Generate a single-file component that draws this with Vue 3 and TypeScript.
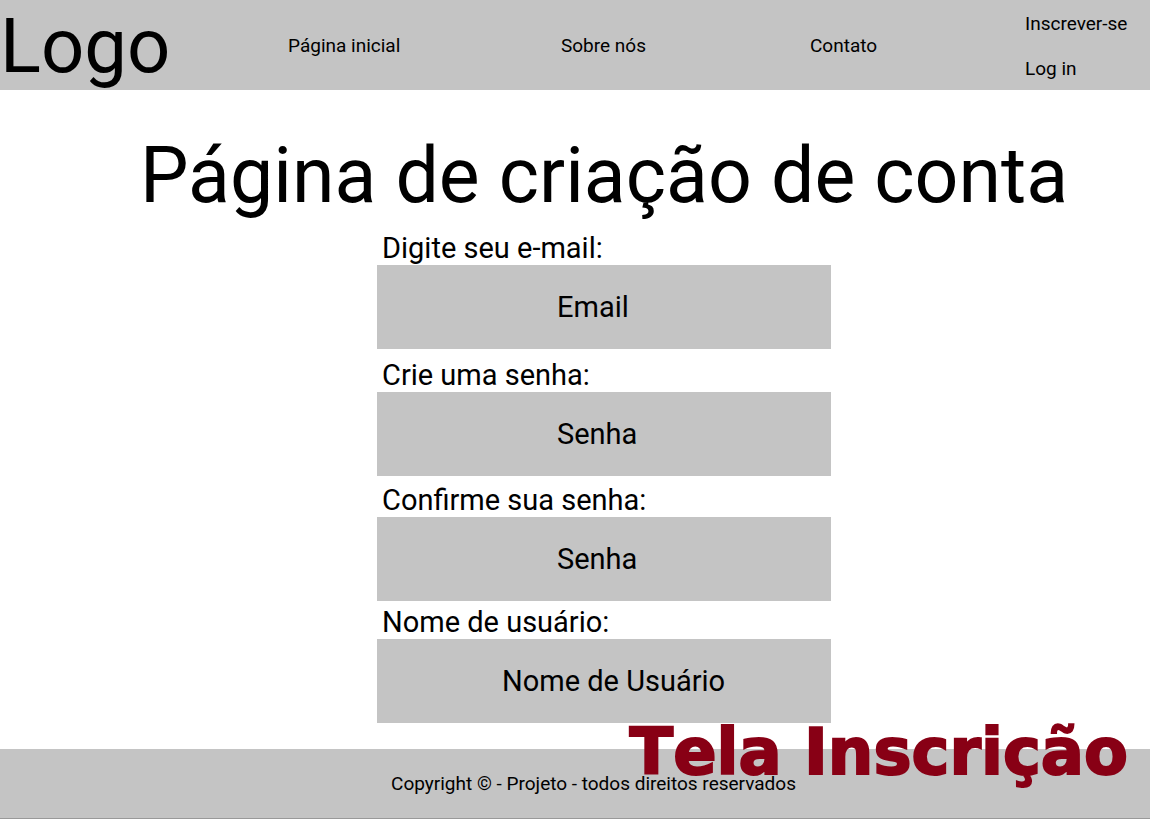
<script setup lang="ts">
import { reactive } from 'vue'

interface Field {
  id: string
  label: string
  placeholder: string
  type: string
  wide?: boolean
}

const fields: Field[] = [
  { id: 'email', label: 'Digite seu e-mail:', placeholder: 'Email', type: 'email' },
  { id: 'senha', label: 'Crie uma senha:', placeholder: 'Senha', type: 'password' },
  { id: 'confirma', label: 'Confirme sua senha:', placeholder: 'Senha', type: 'password' },
  { id: 'usuario', label: 'Nome de usuário:', placeholder: 'Nome de Usuário', type: 'text', wide: true },
]

const values = reactive<Record<string, string>>({ email: '', senha: '', confirma: '', usuario: '' })
</script>

<template>
  <div class="page">
    <header class="header">
      <a class="logo" href="#">Logo</a>
      <a class="link" href="#inicio">Página inicial</a>
      <a class="link" href="#sobre">Sobre nós</a>
      <a class="link" href="#contato">Contato</a>
      <nav class="account">
        <a class="link" href="#inscrever">Inscrever-se</a>
        <a class="link" href="#login">Log in</a>
      </nav>
    </header>

    <main class="main">
      <h1 class="title">Página de criação de conta</h1>
      <form class="form" @submit.prevent>
        <div v-for="f in fields" :key="f.id" class="field">
          <label class="label" :for="f.id">{{ f.label }}</label>
          <input
            :id="f.id"
            v-model="values[f.id]"
            class="input"
            :class="{ wide: f.wide }"
            :type="f.type"
            :placeholder="f.placeholder"
          />
        </div>
      </form>
    </main>

    <footer class="footer">
      <p class="copyright">Copyright © - Projeto - todos direitos reservados</p>
      <strong class="caption">Tela Inscrição</strong>
    </footer>
  </div>
</template>

<style>
body {
  margin: 0;
  background: #fff;
}
</style>

<style scoped>
.page {
  display: flex;
  flex-direction: column;
  min-height: 100vh;
  color: #000;
  font-family: Roboto, "Liberation Sans", sans-serif;
}

.header {
  display: grid;
  grid-template-columns: 288fr 273fr 249fr 215fr 125fr;
  align-items: center;
  box-sizing: border-box;
  min-height: 90px;
  padding-top: 2px;
  background: #c4c4c4;
}

.header > * {
  min-width: 0;
}

.logo {
  color: inherit;
  font-size: 76px;
  line-height: 88px;
  text-decoration: none;
}

.link {
  color: inherit;
  font-size: 19px;
  line-height: 24px;
  text-decoration: none;
  white-space: nowrap;
}

.account {
  display: flex;
  flex-direction: column;
  gap: 21px;
}

.main {
  display: flex;
  flex: 1;
  flex-direction: column;
  align-items: center;
  padding: 41px 0 26px 58px;
}

.title {
  margin: 0;
  font-size: 77px;
  font-weight: 400;
  line-height: 90px;
  text-align: center;
}

.form {
  display: grid;
  grid-template-rows: 127px 125px 122px auto;
  width: 100%;
  max-width: 454px;
  padding-top: 10px;
}

.field {
  display: flex;
  flex-direction: column;
}

.label {
  padding-left: 5px;
  font-size: 29px;
  line-height: 34px;
}

.input {
  box-sizing: border-box;
  width: 100%;
  height: 84px;
  padding: 0 0 0 180px;
  border: 0;
  border-radius: 0;
  outline: 0;
  background: #c4c4c4;
  color: #000;
  font: inherit;
  font-size: 29px;
}

.input.wide {
  padding-left: 125px;
}

.input::placeholder {
  color: #000;
  opacity: 1;
}

.footer {
  position: relative;
  box-sizing: border-box;
  min-height: 70px;
  padding: 23px 0 22px 37px;
  border-bottom: 1px solid #999;
  background: #c4c4c4;
}

.copyright {
  margin: 0;
  font-size: 19px;
  line-height: 24px;
  text-align: center;
}

.caption {
  position: absolute;
  right: 22px;
  bottom: 26px;
  color: #880015;
  font-family: "Arial Black", "DejaVu Sans", sans-serif;
  font-size: 64px;
  font-weight: 900;
  font-kerning: none;
  line-height: 80px;
  white-space: nowrap;
  -webkit-text-stroke: 2px #880015;
}
</style>
